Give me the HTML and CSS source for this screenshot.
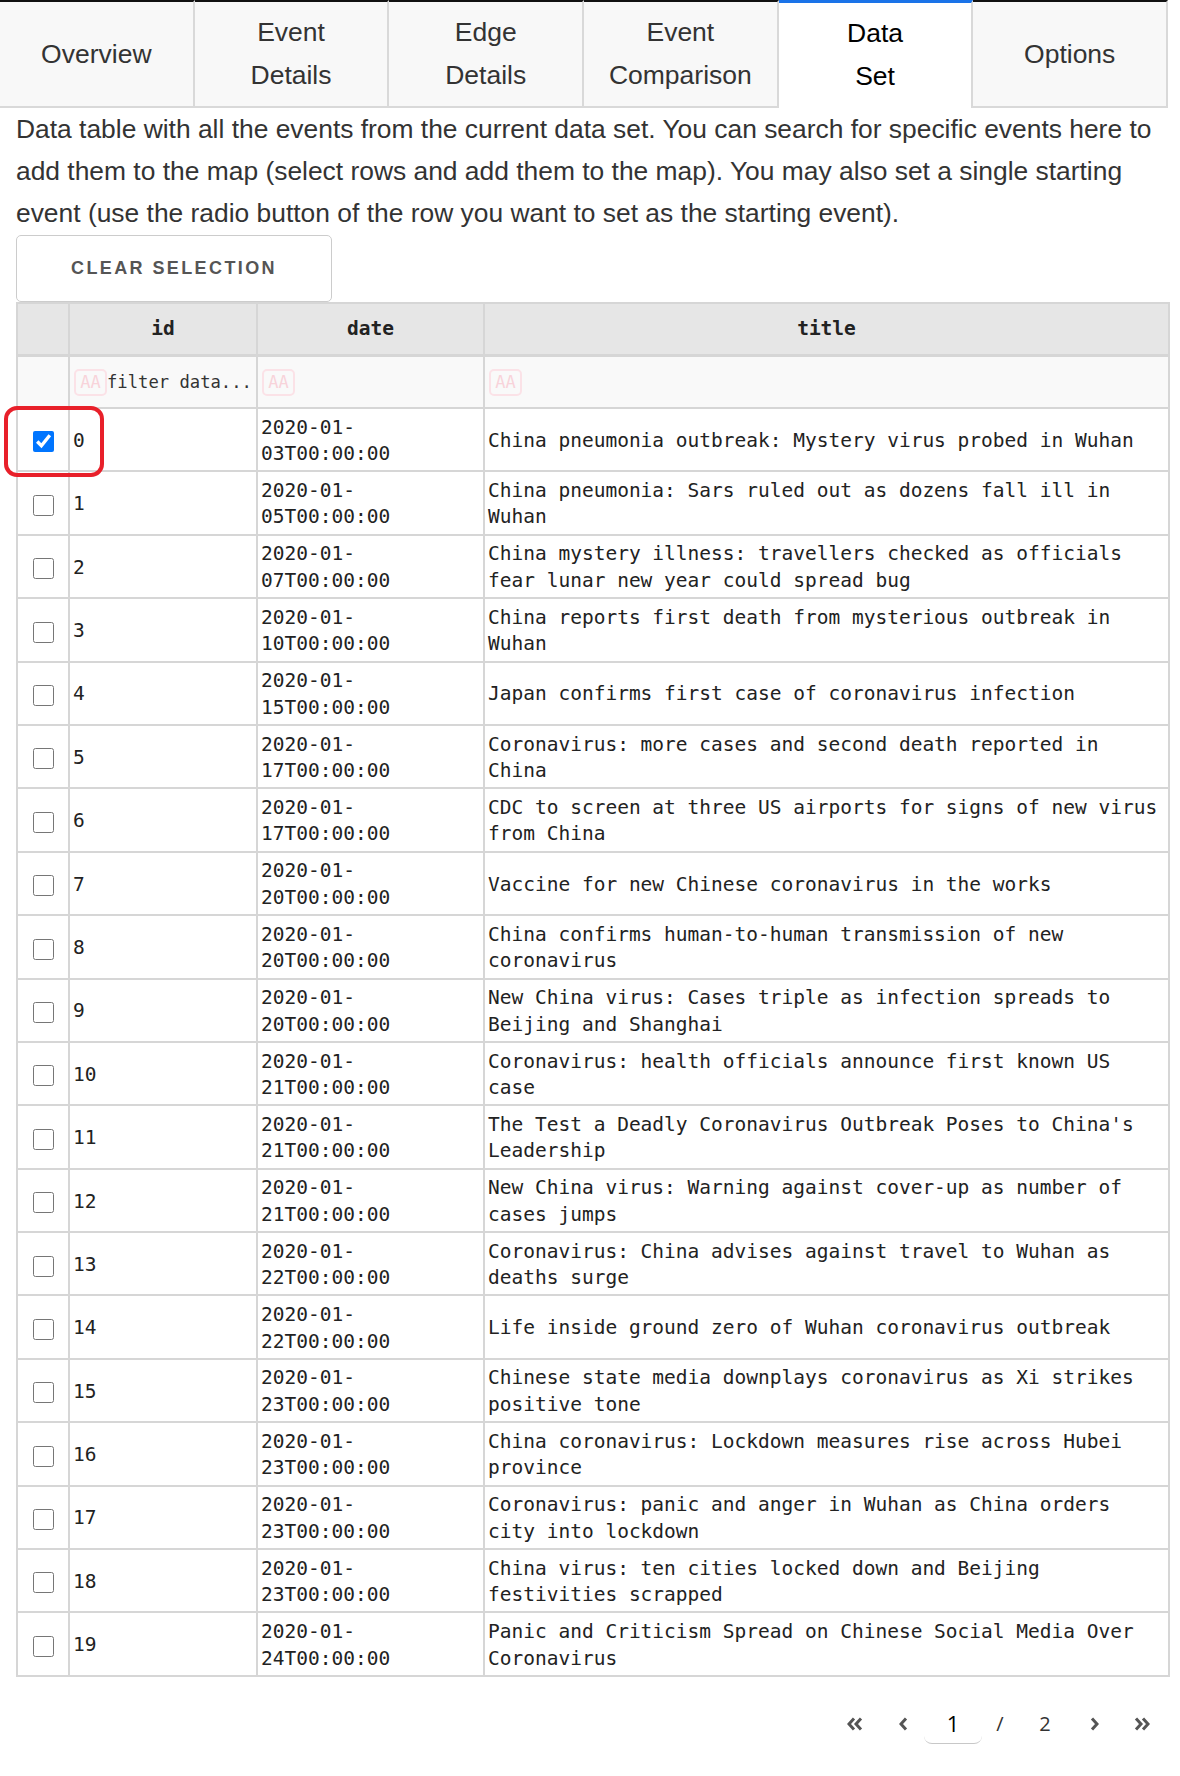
FILE: index.html
```html
<!DOCTYPE html>
<html>
<head>
<meta charset="utf-8">
<link rel="stylesheet" href="styles.css">
</head>
<body>
<div class="page">
  <div class="tabs">
    <div class="tab">Overview</div>
    <div class="tab">Event<br>Details</div>
    <div class="tab">Edge<br>Details</div>
    <div class="tab">Event<br>Comparison</div>
    <div class="tab active">Data<br>Set</div>
    <div class="tab">Options</div>
  </div>
  <div class="content">
    <p class="intro">Data table with all the events from the current data set. You can search for specific events here to add them to the map (select rows and add them to the map). You may also set a single starting event (use the radio button of the row you want to set as the starting event).</p>
    <button class="clear-btn">CLEAR SELECTION</button>
    <div class="table-wrap">
      <table class="grid">
        <colgroup>
          <col class="c-sel"><col class="c-id"><col class="c-date"><col class="c-title">
        </colgroup>
        <thead>
          <tr class="head"><th></th><th>id</th><th>date</th><th>title</th></tr>
          <tr class="filter">
            <td></td>
            <td><span class="aa">AA</span><span class="ph">filter data...</span></td>
            <td><span class="aa">AA</span></td>
            <td><span class="aa">AA</span></td>
          </tr>
        </thead>
        <tbody>
          <tr><td class="sel"><input type="checkbox" checked></td><td>0</td><td>2020-01-03T00:00:00</td><td>China pneumonia outbreak: Mystery virus probed in Wuhan</td></tr>
          <tr><td class="sel"><input type="checkbox"></td><td>1</td><td>2020-01-05T00:00:00</td><td>China pneumonia: Sars ruled out as dozens fall ill in Wuhan</td></tr>
          <tr><td class="sel"><input type="checkbox"></td><td>2</td><td>2020-01-07T00:00:00</td><td>China mystery illness: travellers checked as officials fear lunar new year could spread bug</td></tr>
          <tr><td class="sel"><input type="checkbox"></td><td>3</td><td>2020-01-10T00:00:00</td><td>China reports first death from mysterious outbreak in Wuhan</td></tr>
          <tr><td class="sel"><input type="checkbox"></td><td>4</td><td>2020-01-15T00:00:00</td><td>Japan confirms first case of coronavirus infection</td></tr>
          <tr><td class="sel"><input type="checkbox"></td><td>5</td><td>2020-01-17T00:00:00</td><td>Coronavirus: more cases and second death reported in China</td></tr>
          <tr><td class="sel"><input type="checkbox"></td><td>6</td><td>2020-01-17T00:00:00</td><td>CDC to screen at three US airports for signs of new virus from China</td></tr>
          <tr><td class="sel"><input type="checkbox"></td><td>7</td><td>2020-01-20T00:00:00</td><td>Vaccine for new Chinese coronavirus in the works</td></tr>
          <tr><td class="sel"><input type="checkbox"></td><td>8</td><td>2020-01-20T00:00:00</td><td>China confirms human-to-human transmission of new coronavirus</td></tr>
          <tr><td class="sel"><input type="checkbox"></td><td>9</td><td>2020-01-20T00:00:00</td><td>New China virus: Cases triple as infection spreads to Beijing and Shanghai</td></tr>
          <tr><td class="sel"><input type="checkbox"></td><td>10</td><td>2020-01-21T00:00:00</td><td>Coronavirus: health officials announce first known US case</td></tr>
          <tr><td class="sel"><input type="checkbox"></td><td>11</td><td>2020-01-21T00:00:00</td><td>The Test a Deadly Coronavirus Outbreak Poses to China's Leadership</td></tr>
          <tr><td class="sel"><input type="checkbox"></td><td>12</td><td>2020-01-21T00:00:00</td><td>New China virus: Warning against cover-up as number of cases jumps</td></tr>
          <tr><td class="sel"><input type="checkbox"></td><td>13</td><td>2020-01-22T00:00:00</td><td>Coronavirus: China advises against travel to Wuhan as deaths surge</td></tr>
          <tr><td class="sel"><input type="checkbox"></td><td>14</td><td>2020-01-22T00:00:00</td><td>Life inside ground zero of Wuhan coronavirus outbreak</td></tr>
          <tr><td class="sel"><input type="checkbox"></td><td>15</td><td>2020-01-23T00:00:00</td><td>Chinese state media downplays coronavirus as Xi strikes positive tone</td></tr>
          <tr><td class="sel"><input type="checkbox"></td><td>16</td><td>2020-01-23T00:00:00</td><td>China coronavirus: Lockdown measures rise across Hubei province</td></tr>
          <tr><td class="sel"><input type="checkbox"></td><td>17</td><td>2020-01-23T00:00:00</td><td>Coronavirus: panic and anger in Wuhan as China orders city into lockdown</td></tr>
          <tr><td class="sel"><input type="checkbox"></td><td>18</td><td>2020-01-23T00:00:00</td><td>China virus: ten cities locked down and Beijing festivities scrapped</td></tr>
          <tr><td class="sel"><input type="checkbox"></td><td>19</td><td>2020-01-24T00:00:00</td><td>Panic and Criticism Spread on Chinese Social Media Over Coronavirus</td></tr>
        </tbody>
      </table>
      <div class="highlight"></div>
    </div>
    <div class="pager">
      <span class="pg-btn"><svg width="16" height="14" viewBox="0 0 16 14"><path d="M7 1.5 L2 7 L7 12.5 M14 1.5 L9 7 L14 12.5" fill="none" stroke="#555" stroke-width="3"/></svg></span>
      <span class="pg-btn"><svg width="9" height="14" viewBox="0 0 9 14"><path d="M7 1.5 L2 7 L7 12.5" fill="none" stroke="#555" stroke-width="3"/></svg></span>
      <span class="pg-input">1</span>
      <span class="pg-text">/</span>
      <span class="pg-text">2</span>
      <span class="pg-btn"><svg width="9" height="14" viewBox="0 0 9 14"><path d="M2 1.5 L7 7 L2 12.5" fill="none" stroke="#555" stroke-width="3"/></svg></span>
      <span class="pg-btn"><svg width="16" height="14" viewBox="0 0 16 14"><path d="M2 1.5 L7 7 L2 12.5 M9 1.5 L14 7 L9 12.5" fill="none" stroke="#555" stroke-width="3"/></svg></span>
    </div>
  </div>
</div>
</body>
</html>
```

FILE: styles.css
```css
html, body {
  margin: 0;
  padding: 0;
  background: #ffffff;
}
body {
  font-family: "Liberation Sans", Arial, sans-serif;
  color: #333333;
}
.page {
  width: 1168px;
}
.tabs {
  display: flex;
  height: 108px;
}
.tab {
  flex: 1 1 0;
  box-sizing: border-box;
  display: flex;
  align-items: center;
  justify-content: center;
  text-align: center;
  font-size: 26.5px;
  line-height: 43px;
  color: #333333;
  background: #f8f8f8;
  border-top: 2px solid #111111;
  border-right: 2px solid #d9d9d9;
  border-bottom: 2px solid #d9d9d9;
}
.tab.active {
  background: #ffffff;
  color: #000000;
  border-top: 3px solid #1a73e8;
  border-bottom: none;
  padding-bottom: 2px;
}
.content {
  padding-left: 16px;
}
.intro {
  margin: 0;
  font-size: 26.4px;
  line-height: 42px;
  color: #333333;
}
.clear-btn {
  display: block;
  box-sizing: border-box;
  width: 316px;
  height: 67px;
  margin: 1px 0 0 0;
  padding: 0;
  background: #ffffff;
  border: 1px solid #cccccc;
  border-radius: 5px;
  font-family: "Liberation Sans", Arial, sans-serif;
  font-weight: bold;
  font-size: 18px;
  letter-spacing: 2.4px;
  color: #555555;
}
.table-wrap {
  position: relative;
}
.grid {
  width: 1152px;
  table-layout: fixed;
  border-collapse: collapse;
  font-family: "DejaVu Sans Mono", "Liberation Mono", monospace;
  font-size: 19.5px;
  color: #222222;
}
.c-sel { width: 52px; }
.c-id { width: 188px; }
.c-date { width: 227px; }
.c-title { width: 685px; }
.grid th, .grid td {
  border: 2px solid #d6d6d6;
  padding: 5.6px 5px 2.8px 3px;
  line-height: 26.5px;
  text-align: left;
  vertical-align: middle;
  overflow: visible;
  white-space: normal;
}
.grid tr.head th {
  background: #e6e6e6;
  height: 50px;
  padding: 0 5px;
  font-weight: bold;
  text-align: center;
  border-bottom: 3px solid #d6d6d6;
}
.grid tr.filter td {
  background: #f9f9f9;
  height: 50px;
  padding: 0 3px 0 4px;
  white-space: nowrap;
  overflow: hidden;
}
.aa {
  display: inline-block;
  box-sizing: border-box;
  width: 33px;
  height: 27px;
  border: 2px solid #fbe2e7;
  border-radius: 5px;
  color: #f8d3da;
  font-size: 17px;
  line-height: 23px;
  text-align: center;
  vertical-align: middle;
}
.ph {
  vertical-align: middle;
  color: #333333;
  font-size: 17.2px;
}
.grid td.sel {
  text-align: center;
  padding: 0;
}
.grid td.sel input {
  width: 21px;
  height: 21px;
  margin: 4px 0 0 0;
  vertical-align: middle;
}
.highlight {
  position: absolute;
  left: -12px;
  top: 104px;
  width: 100px;
  height: 71px;
  box-sizing: border-box;
  border: 4px solid #e8202a;
  border-radius: 13px;
  pointer-events: none;
}
.pager {
  display: grid;
  grid-template-columns: 54px 42px 58px 36px 54px 44px 52px;
  margin: 27px 0 0 812px;
  height: 40px;
  align-items: center;
  justify-items: center;
  font-family: "Open Sans", "DejaVu Sans", sans-serif;
}
.pg-btn {
  display: flex;
  align-items: center;
  justify-content: center;
}
.pg-input {
  box-sizing: border-box;
  width: 58px;
  height: 40px;
  line-height: 38px;
  text-align: center;
  font-size: 22px;
  color: #000000;
  border-bottom: 1px solid #c8c8c8;
  border-radius: 0 0 8px 8px;
}
.pg-text {
  font-size: 20px;
  color: #333333;
}
```
